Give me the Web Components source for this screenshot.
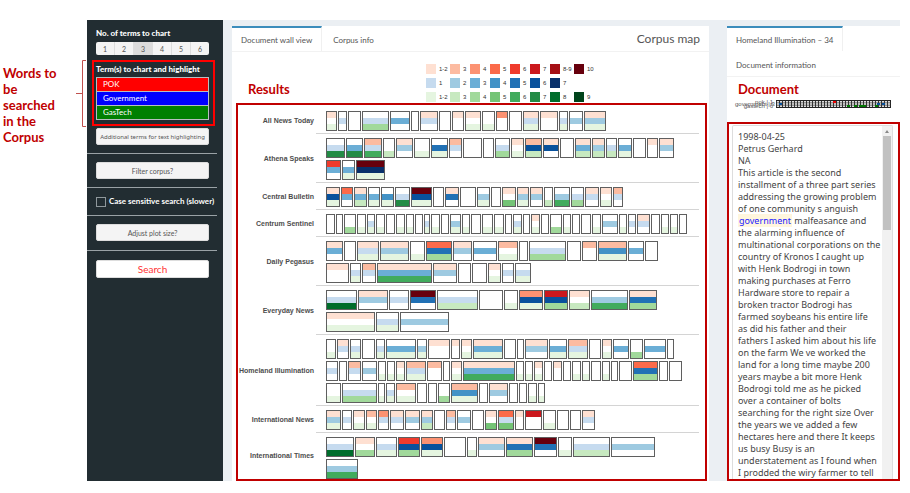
<!DOCTYPE html>
<html lang="en">
<head>
<meta charset="utf-8">
<title>Corpus map</title>
<style>
  html { --mark: #c00000; --ui: Lato, "Open Sans", sans-serif; background: #fff; }
  body { margin: 0; padding: 20px 10px 12px 0; display: flex; align-items: stretch; font-family: var(--ui); color: #555; }
  corpus-app { flex: 1; min-width: 0; }
</style>
</head>
<body>
<callout-note>Words to be searched in the Corpus</callout-note>
<corpus-app></corpus-app>

<script>
const define = (name, html, setup) => customElements.define(name, class extends HTMLElement {
  constructor() {
    super();
    const t = document.createElement('template');
    t.innerHTML = '<style>*{box-sizing:border-box} :host{box-sizing:border-box}</style>' + html;
    this.attachShadow({ mode: 'open' }).append(t.content.cloneNode(true));
  }
  connectedCallback() { if (setup) setup(this, this.shadowRoot); }
});

/* Side note with a bracket pointing at the search terms */
define('callout-note', `
<style>
  :host { display: flex; align-items: flex-start; flex: 0 0 87px; padding-top: 40px; }
  p { margin: 5px 0 0; padding: 0 10px 0 3px; flex: 1; min-width: 0; font: bold 13px/16px Lato, sans-serif; color: var(--mark); }
  svg { flex: none; }
</style>
<p><slot></slot></p>
<svg width="11" height="67" viewBox="0 0 11 67" fill="none" stroke="#c0504d"><path d="M10 .5H6.500V66.500H10M6.500 33.500H0"/></svg>`);

define('corpus-app', `
<style>
  :host { display: flex; }
  main { flex: 1; min-width: 0; display: flex; gap: 18px; padding: 6px 0 0 9px; background: #ebeff3; }
  map-panel { flex: 477 1 0; min-width: 0; }
  document-panel { flex: 173 1 0; min-width: 0; }
</style>
<search-sidebar></search-sidebar>
<main><map-panel></map-panel><document-panel></document-panel></main>`);

define('search-sidebar', `
<style>
  :host { display: block; flex: 0 0 136px; min-width: 0; background: #222d32; color: #fff; padding-top: 7px; font-size: 8px; line-height: 12px; }
  section { padding: 0 14px 0 9px; }
  h2 { margin: 0; font: 900 8px/12px var(--ui); white-space: nowrap; }
  term-frame { margin: 5px 8px 2px 5px; }
  hr { margin: 8px 6px 8px 0; border: 0; height: 1px; background: #9aa2a6; }
  hr:last-of-type { margin: 9px 6px 9px 0; }
  label { display: flex; align-items: center; gap: 3px; height: 11px; white-space: nowrap; font: bold 8px/11px var(--ui); }
  input { appearance: none; width: 10px; height: 10px; margin: 0; border: 1px solid #8f989c; background: #222d32; flex: none; }
  input:checked { background: #3c8dbc; }
  .wide { padding-right: 0; }
</style>
<section><h2>No. of terms to chart</h2><count-picker></count-picker></section>
<term-frame></term-frame>
<section><side-button class="small">Additional terms for text highlighting</side-button></section>
<hr>
<section><side-button>Filter corpus?</side-button></section>
<hr>
<section class="wide"><label><input type="checkbox">Case sensitive search (slower)</label></section>
<hr>
<section><side-button>Adjust plot size?</side-button></section>
<hr>
<section><side-button class="search">Search</side-button></section>`);

define('side-button', `
<style>
  :host { display: block; }
  button { display: block; width: 100%; height: 17px; padding: 0; border: 1px solid #ddd; border-radius: 2px; background: #f4f4f4; color: #555; font: 7px/14px var(--ui); white-space: nowrap; }
  :host(.small) button { font: 6px/14px "Noto Sans", sans-serif; }
  :host(.search) button { height: 18px; background: #fff; color: #f33; font-size: 10px; }
</style>
<button type="button"><slot></slot></button>`);

define('count-picker', `
<style>
  :host { display: flex; margin-top: 3px; border-radius: 2px; overflow: hidden; }
  button { flex: 1; height: 13px; padding: 0; border: 0; border-right: 1px solid #ddd; background: #f4f4f4; color: #555; font: 7px/12px var(--ui); }
  button:last-child { border-right: 0; }
  button[aria-pressed=true] { background: #dcdcdc; }
</style>`, (el, root) => {
  for (let n = 1; n <= 6; n++) {
    const b = document.createElement('button');
    b.type = 'button'; b.textContent = n; b.setAttribute('aria-pressed', n === 3);
    b.onclick = () => root.querySelectorAll('button').forEach(o => o.setAttribute('aria-pressed', o === b));
    root.append(b);
  }
});

define('term-frame', `
<style>
  :host { display: block; border: 2px solid #f00; padding: 1px 4px 4px 2px; }
  h2 { margin: 0 0 2px; font: 900 8px/12px var(--ui); white-space: nowrap; }
  div { border: 1px solid #b9bec0; display: grid; gap: 1px; background: #b9bec0; }
  input { display: block; width: 100%; height: 13px; margin: 0; padding: 0 6px; border: 0; border-radius: 0; color: #fff; font: 8px/13px var(--ui); }
</style>
<h2>Term(s) to chart and highlight</h2>
<div>
  <input aria-label="First term" value="POK" style="background:#f00">
  <input aria-label="Second term" value="Government" style="background:#00f">
  <input aria-label="Third term" value="GasTech" style="background:#008000">
</div>`);

define('tab-item', `
<style>
  :host { display: block; }
  button { display: block; height: 25px; padding: 0 9px; border: 0; border-top: 2px solid transparent; background: #fff; color: #555; font: 8px/22px var(--ui); white-space: nowrap; }
  :host([active]) button { border-top-color: #3c8dbc; border-right: 1px solid #f0f0f0; }
</style>
<button type="button"><slot></slot></button>`);

define('map-panel', `
<style>
  :host { display: flex; flex-direction: column; background: #fff; }
  nav { display: flex; border-bottom: 1px solid #f2f2f2; }
  nav tab-item + tab-item { margin-left: 2px; }
  h1 { margin: 0 9px 0 auto; font: 12px/25px var(--ui); color: #555; }
  .top { display: grid; grid-template-columns: 194px 1fr; height: 51px; padding-top: 12px; }
  h2 { margin: 0; align-self: end; padding: 0 0 6px 16px; font: bold 13px/16px Lato, sans-serif; color: var(--mark); }
  corpus-wall { margin: 0 2px 0 4px; }
</style>
<nav><tab-item active>Document wall view</tab-item><tab-item>Corpus info</tab-item><h1>Corpus map</h1></nav>
<div class="top"><h2>Results</h2><count-legend></count-legend></div>
<corpus-wall></corpus-wall>`);

const REDS = ['#fee0d2', '#fcbba1', '#fc9272', '#fb6a4a', '#ef3b2c', '#cb181d', '#a50f15', '#67000d'];
const BLUES = ['#c6dbef', '#9ecae1', '#6baed6', '#4292c6', '#2171b5', '#08519c', '#08306b'];
const GREENS = ['#e5f5e0', '#c7e9c0', '#a1d99b', '#74c476', '#41ab5d', '#238b45', '#006d2c', '#00441b'];

define('count-legend', `
<style>
  :host { display: grid; grid-template-columns: 24px repeat(5, 20px) 24px 24px; grid-auto-rows: 10px; row-gap: 4px; font: 6px/10px "Liberation Sans", sans-serif; color: #333; }
  span { display: flex; gap: 3px; }
  i { width: 10px; height: 10px; }
</style>`, (el, root) => {
  const rows = [[REDS, '1-2 3 4 5 6 7 8-9 10'], [BLUES, '1 2 3 4 5 6 7'], [GREENS, '1-2 3 4 5 6 7 8 9']];
  rows.forEach(([colours, names], r) => names.split(' ').forEach((name, c) => {
    const s = document.createElement('span');
    s.style.gridArea = `${r + 1} / ${c + 1}`;
    s.innerHTML = `<i style="background:${colours[c]}"></i>${name}`;
    root.append(s);
  }));
});

/* Each article is "start:levels"; levels are red, blue and green steps (0 = term absent).
   A line ends with the running total, so every width is the distance to the next start. */
const WALL = [
['All News Today', '0:101 12:010 22:000 36:013 64:030 85:000 94:110 113:000 126:100 139:101 156:001 170:300 183:000 197:111 214:100 233:011 243:020 258:121 281'],
['Athena Speaks', '0:016 20:036 38:215 57:002 70:120 88:001 105:051 123:210 137:000 157:000 169:013 185:101 199:262 217:160 234:000 249:132 266:122 280:012 292:031 307:000 321:100 333:120 349', '0:530 16:031 30:871 60'],
['Central Bulletin', '0:161 15:430 28:132 42:031 55:041 69:016 85:861 107:000 119:150 134:000 151:021 165:000 176:104 191:121 204:120 218:002 228:025 245:013 259:110 274:101 287:210 298'],
['Centrum Sentinel', '0:000 10:000 18:003 31:001 41:011 50:001 60:000 70:001 80:001 89:000 98:011 105:001 115:000 124:021 136:001 145:000 156:001 168:001 179:000 187:011 197:000 205:101 215:000 224:003 237:001 246:000 255:000 266:001 276:020 293:001 302:010 311:110 325:000 335:001 344:001 353:000 362'],
['Daily Pegasus', '0:130 18:000 31:111 54:121 84:001 100:453 127:120 147:030 172:201 193:000 203:013 241:000 256:200 272:241 302:030 319:000 333', '0:100 24:011 36:210 51:135 107:120 132:000 146:000 162:101 176:010 189:011 206'],
['Everyday News', '0:017 32:120 63:010 84:850 111:012 153:000 178:001 193:361 218:663 243:102 265:025 303:153 332', '0:101 50:011 74:020 124'],
['Homeland Illumination', '0:001 11:110 24:011 36:000 50:011 60:031 91:021 102:100 125:100 135:101 147:131 178:000 191:000 199:120 223:031 242:211 263:000 276:101 287:030 304:003 318:030 341:000 349', '0:010 13:000 22:210 36:020 52:001 61:001 70:101 80:211 101:200 117:000 125:101 137:135 190:001 199:001 208:101 218:000 227:100 237:000 246:001 256:001 265:000 276:001 285:000 293:000 307:453 333:000 343:000 357', '0:001 16:013 52:001 60:011 70:201 91:000 102:000 112:003 125:241 153:000 163:120 183:000 193:000 202:001 212:001 220'],
['International News', '0:121 16:010 27:101 40:201 52:310 64:110 79:120 95:122 108:000 120:210 131:020 146:000 159:104 172:414 189:100 199:600 217:001 231:000 244:000 256:110 270'],
['International Times', '0:017 29:103 50:011 72:563 95:361 118:000 141:001 152:120 180:153 208:850 232:001 247:012 285:020 330', '0:025 33']
];

define('article-tile', `
<style>
  :host { display: grid; grid-template-rows: repeat(3, 1fr); height: 20px; border: 1px solid #5f5f5f; background: #fff; flex: none; }
</style>`, (el, root) => {
  [REDS, BLUES, GREENS].forEach((scale, i) => {
    const band = document.createElement('i');
    const level = +el.dataset.levels[i];
    if (level) band.style.background = scale[level - 1];
    root.append(band);
  });
});

define('wall-row', `
<style>
  :host { display: grid; grid-template-columns: 76px 1fr; column-gap: 2px; align-items: center; }
  b { font: bold 7px/10px "Liberation Sans", sans-serif; color: #4d4d4d; text-align: right; white-space: nowrap; }
  .lines { display: grid; row-gap: 2px; padding: 4px 0 2px 10px; border-bottom: 1px solid #d4d4d4; }
  .line { display: flex; gap: 1px; }
  :host(:last-child) .lines { border-bottom: 0; padding-bottom: 0; }
</style>
<b><slot></slot></b><div class="lines"></div>`);

define('corpus-wall', `
<style>
  :host { display: block; border: 2px solid var(--mark); padding: 2px 6px 0 0; }
</style>`, (el, root) => {
  for (const [name, ...lines] of WALL) {
    const row = document.createElement('wall-row');
    row.textContent = name;
    for (const text of lines) {
      const line = document.createElement('div');
      line.className = 'line';
      const items = text.split(' ');
      items.slice(0, -1).forEach((item, i) => {
        const [start, levels] = item.split(':');
        const tile = document.createElement('article-tile');
        tile.dataset.levels = levels;
        tile.style.width = parseInt(items[i + 1]) - start - 1 + 'px';
        line.append(tile);
      });
      row.shadowRoot.querySelector('.lines').append(line);
    }
    root.append(row);
  }
});

define('document-panel', `
<style>
  :host { display: flex; flex-direction: column; background: #fff; }
  nav { display: flex; flex-direction: column; align-items: flex-start; border-bottom: 1px solid #f2f2f2; }
  h2 { margin: 4px 0 0 11px; font: bold 13px/16px Lato, sans-serif; color: var(--mark); }
  term-strip { margin: 2px 9px 13px 8px; }
  document-text { flex: 1 1 0; min-height: 0; }
</style>
<nav><tab-item active>Homeland Illumination – 34</tab-item><tab-item>Document information</tab-item></nav>
<h2>Document</h2>
<term-strip></term-strip>
<document-text></document-text>`);

define('term-strip', `
<style>
  :host { display: flex; align-items: center; height: 10px; gap: 3px; }
  ul { list-style: none; margin: 0; padding: 0; width: 38px; flex: none; text-align: right; font: 6px/2px "Liberation Sans", sans-serif; color: #555; white-space: nowrap; }
  svg { flex: 1; min-width: 0; height: 8px; display: block; }
</style>
<ul><li>pok | 1</li><li>government | 3</li><li>gastech | 6</li></ul>
<svg viewBox="0 0 115 8" preserveAspectRatio="none">
  <defs><pattern id="g" width="3" height="8" patternUnits="userSpaceOnUse"><path d="M.5 0V8" stroke="#333"/></pattern></defs>
  <rect width="115" height="8" fill="#ddd"/><rect width="115" height="8" fill="url(#g)"/>
  <path d="M0 .5H115M0 7.500H115M114.500 0V8" stroke="#222"/>
  <path d="M0 2.800H115M0 5.200H115" stroke="#333" stroke-width=".6"/>
  <path d="M57 1h3v2h-3z" fill="#e00"/><path d="M3 3h3v2h-3zM101 3h3v2h-3zM106 3h3v2h-3z" fill="#08519c"/>
  <path d="M71 5h3v2h-3zM78 5h3v2h-3zM83 5h7v2h-7zM99 5h3v2h-3z" fill="#070"/>
</svg>`);

define('document-text', `
<style>
  :host { display: flex; border: 2px solid var(--mark); padding: 1px 5px 0 3px; overflow: hidden; }
  article { flex: 1; min-width: 0; display: flex; border: 1px solid #ddd; border-bottom: 0; border-radius: 2px 2px 0 0; overflow: hidden; }
  p { flex: 1; min-width: 0; margin: 0; padding: 5px 0 0 5px; font: 9px/12px "Noto Sans", sans-serif; color: #444; white-space: pre; }
  mark { color: #22f; background: #fff6dd; padding: 0 1px; }
  .bar { flex: 0 0 10px; background: #f1f1f1; display: flex; flex-direction: column; align-items: center; padding-top: 4px; }
  .bar::before { content: ""; border: 2px solid transparent; border-top: 0; border-bottom: 3px solid #888; }
  .bar::after { content: ""; width: 8px; height: 94px; margin-top: 3px; background: #c1c1c1; }
</style>
<article><p>1998-04-25
Petrus Gerhard
NA
This article is the second
installment of a three part series
addressing the growing problem
of one community s anguish
<mark>government</mark> malfeasance and
the alarming influence of
multinational corporations on the
country of Kronos I caught up
with Henk Bodrogi in town
making purchases at Ferro
Hardware store to repair a
broken tractor Bodrogi has
farmed soybeans his entire life
as did his father and their
fathers I asked him about his life
on the farm We ve worked the
land for a long time maybe 200
years maybe a bit more Henk
Bodrogi told me as he picked
over a container of bolts
searching for the right size Over
the years we ve added a few
hectares here and there It keeps
us busy Busy is an
understatement as I found when
I prodded the wiry farmer to tell
me more I usually head to the</p><div class="bar"></div></article>`);
</script>
</body>
</html>
